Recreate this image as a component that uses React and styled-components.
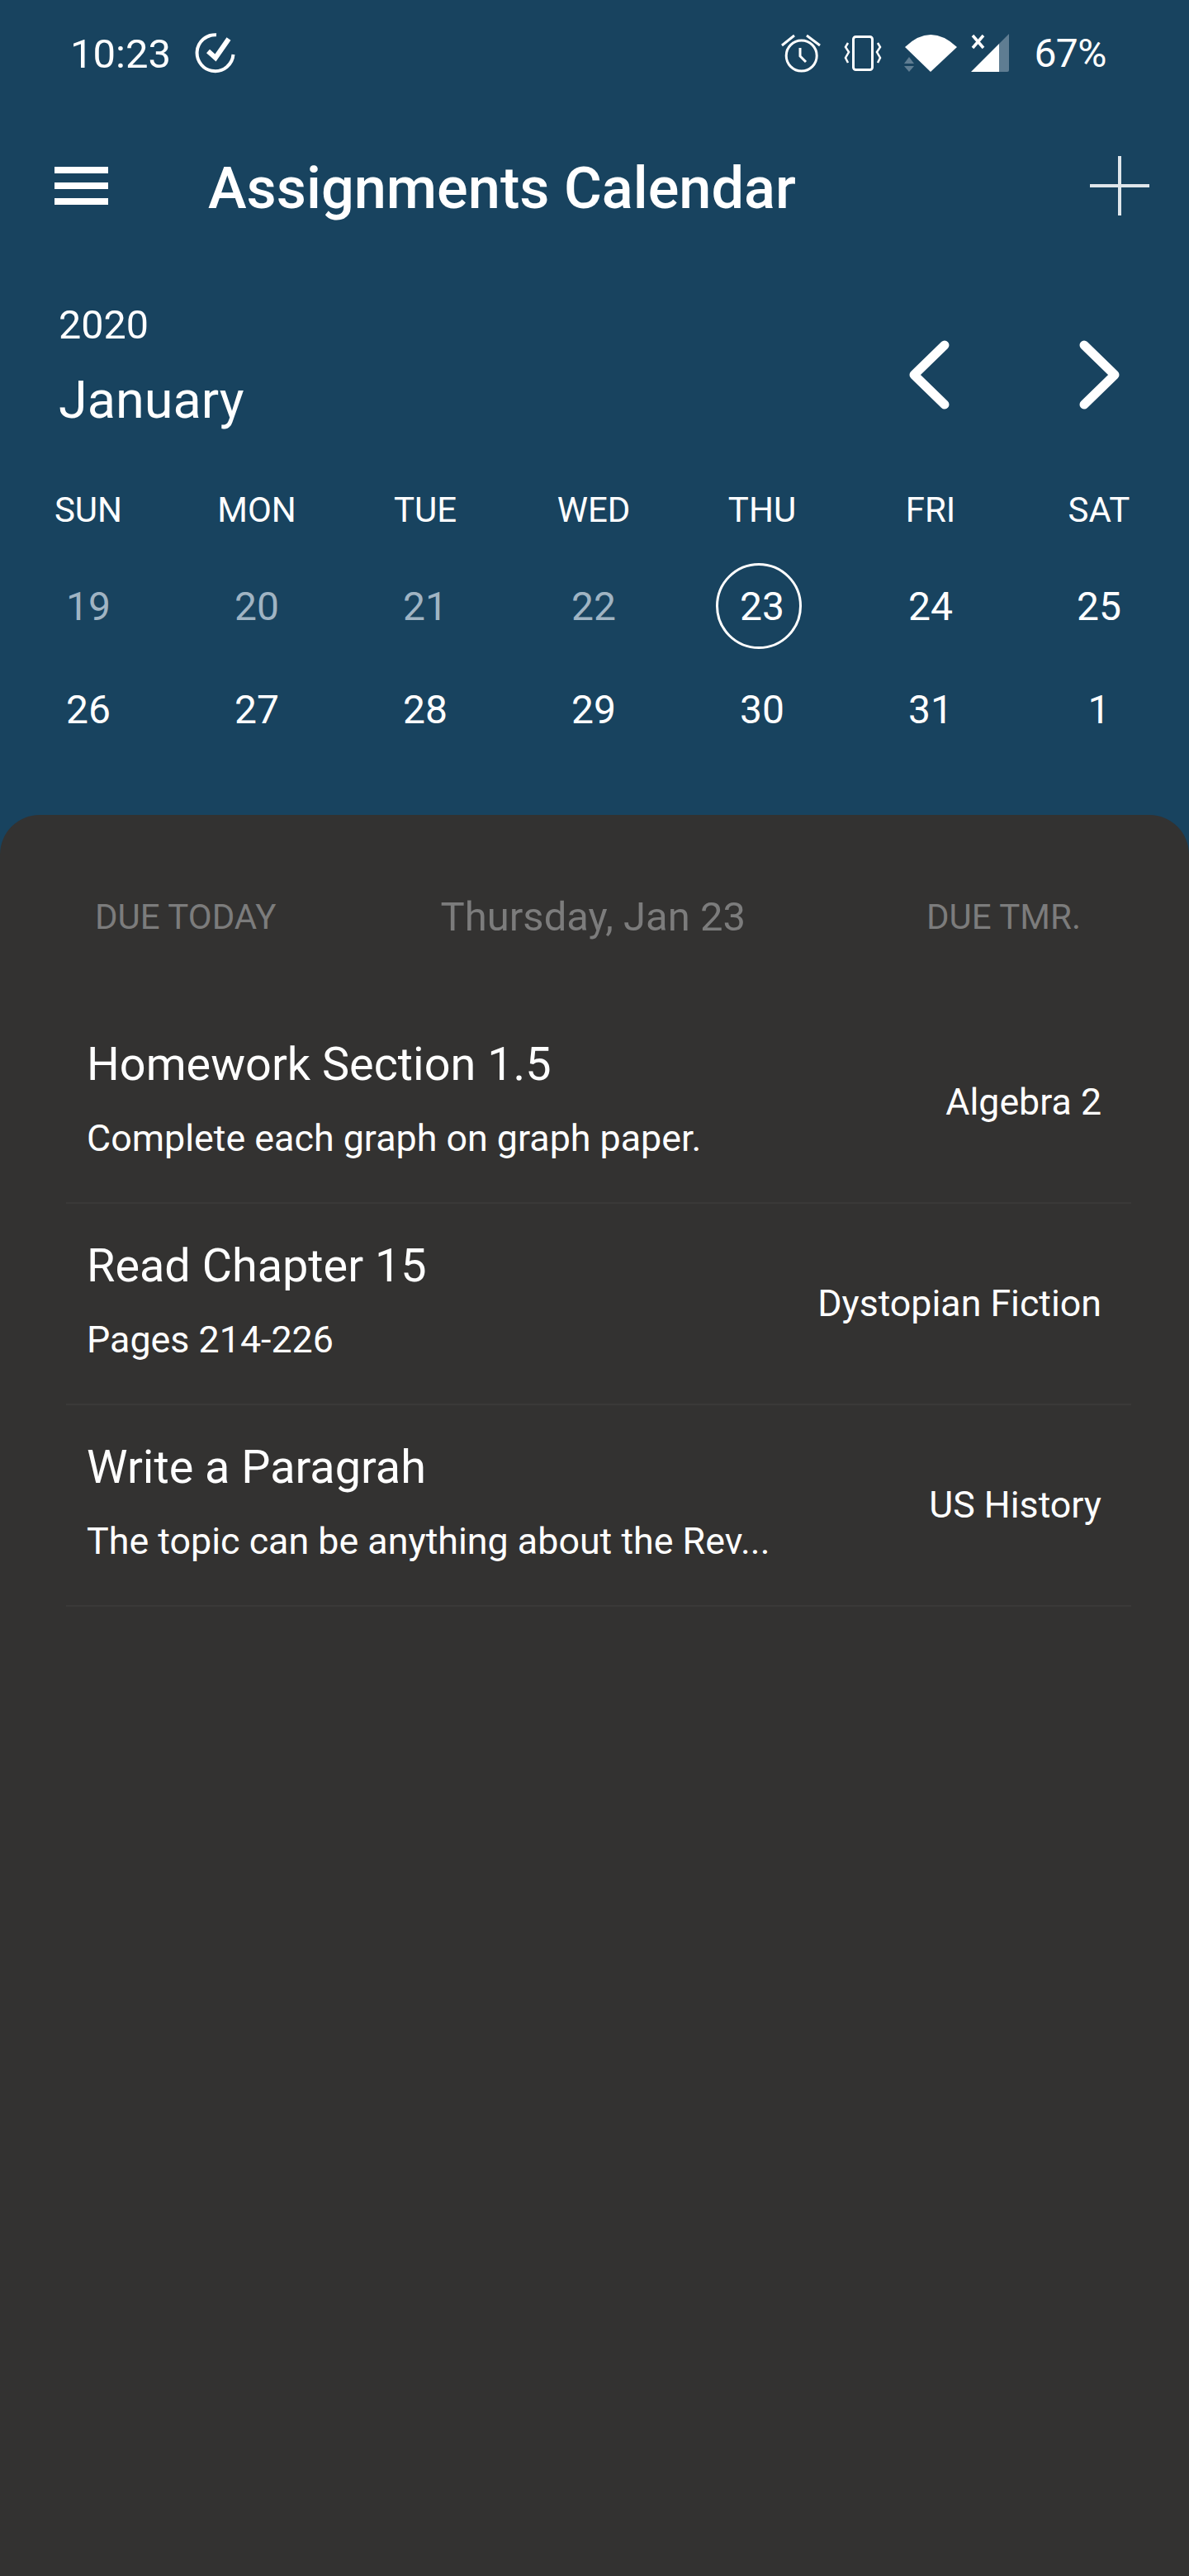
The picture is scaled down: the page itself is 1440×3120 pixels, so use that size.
import React from "react";
import styled, { createGlobalStyle } from "styled-components";

const GlobalStyle = createGlobalStyle`
  html, body {
    margin: 0;
    padding: 0;
    background: #333231;
    font-family: Roboto, "Liberation Sans", sans-serif;
  }
  * { box-sizing: border-box; }
`;

const Screen = styled.div`
  width: 1440px;
  height: 3120px;
  display: flex;
  flex-direction: column;
  background: #18435f;
  color: #ffffff;
  overflow: hidden;
`;

const StatusBar = styled.div`
  height: 130px;
  display: flex;
  align-items: center;
  padding: 0 100px 0 85px;
  flex-shrink: 0;
`;

const Clock = styled.div`
  font-size: 49px;
  line-height: 1;
  margin-right: 29px;
`;

const StatusRight = styled.div`
  margin-left: auto;
  display: flex;
  align-items: center;
`;

const StatusIcon = styled.svg`
  display: block;
  margin-right: ${(p) => p.$gap || 0}px;
`;

const Battery = styled.div`
  font-size: 48px;
  letter-spacing: -0.5px;
  line-height: 1;
  margin-left: 30px;
`;

const AppBar = styled.div`
  height: 100px;
  margin-top: 45px;
  display: flex;
  align-items: center;
  padding: 0 48px 0 66px;
  flex-shrink: 0;
`;

const MenuButton = styled.div`
  width: 65px;
  display: flex;
  flex-direction: column;
  gap: 11px;
  margin-right: 121px;
`;

const MenuBar = styled.div`
  height: 8px;
  background: #ffffff;
`;

const Title = styled.h1`
  margin: 6px 0 0;
  font-size: 70.3px;
  font-weight: 500;
  line-height: 1;
  flex: 1;
`;

const MonthRow = styled.div`
  display: flex;
  justify-content: space-between;
  align-items: center;
  padding: 0 84px 0 71px;
  margin-top: 91px;
  flex-shrink: 0;
`;

const MonthLabel = styled.div`
  display: flex;
  flex-direction: column;
`;

const Year = styled.div`
  font-size: 48.5px;
  line-height: 56px;
`;

const Month = styled.div`
  font-size: 63px;
  line-height: 70px;
  margin-top: 28px;
`;

const MonthNav = styled.div`
  display: flex;
  align-items: center;
  gap: 157px;
  margin-top: 22px;
`;

const CalendarGrid = styled.div`
  display: grid;
  grid-template-columns: repeat(7, 204px);
  padding-left: 5px;
  margin-top: 67px;
  flex-shrink: 0;
`;

const WeekDay = styled.div`
  height: 60px;
  margin-bottom: 25px;
  display: flex;
  align-items: center;
  justify-content: center;
  font-size: 42px;
`;

const DayCell = styled.div`
  height: 125px;
  display: flex;
  align-items: center;
  justify-content: center;
  font-size: 48px;
  position: relative;
  color: ${(p) => (p.$muted ? "#a0b4c3" : "#ffffff")};
`;

const TodayRing = styled.div`
  position: absolute;
  width: 104px;
  height: 104px;
  left: 46px;
  top: 10px;
  border: 3px solid #ffffff;
  border-radius: 50%;
`;

const Sheet = styled.div`
  flex: 1;
  margin-top: 65px;
  background: #333231;
  border-radius: 48px 48px 0 0;
`;

const DueHeader = styled.div`
  display: flex;
  align-items: center;
  justify-content: space-between;
  height: 122px;
  margin-top: 62px;
  padding: 0 131px 0 115px;
  color: #7c7c7c;
`;

const DueSide = styled.div`
  font-size: 42px;
`;

const DueDate = styled.div`
  font-size: 49px;
  margin-right: 20px;
`;

const TaskList = styled.div`
  margin: 43px 70px 0 80px;
`;

const TaskRow = styled.div`
  height: 244px;
  display: flex;
  align-items: center;
  justify-content: space-between;
  padding: 0 36px 0 25px;
  border-bottom: 2px solid #3a3938;
`;

const TaskText = styled.div`
  display: flex;
  flex-direction: column;
  gap: 32px;
  min-width: 0;
  margin-bottom: 8px;
`;

const TaskTitle = styled.div`
  font-size: 55.8px;
  line-height: 64px;
`;

const TaskNote = styled.div`
  font-size: 44.8px;
  line-height: 52px;
  white-space: nowrap;
`;

const TaskCourse = styled.div`
  font-size: 44.7px;
  white-space: nowrap;
`;

const TASKS = [
  { title: "Homework Section 1.5", note: "Complete each graph on graph paper.", course: "Algebra 2" },
  { title: "Read Chapter 15", note: "Pages 214-226", course: "Dystopian Fiction" },
  { title: "Write a Paragrah", note: "The topic can be anything about the Rev...", course: "US History" },
];

const WEEKDAYS = ["SUN", "MON", "TUE", "WED", "THU", "FRI", "SAT"];
const DAYS = [
  [19, true], [20, true], [21, true], [22, true], [23, false, true], [24], [25],
  [26], [27], [28], [29], [30], [31], [1],
];

function CheckIcon() {
  return (
    <svg width="50" height="50" viewBox="0 0 50 50" fill="none" stroke="#fff">
      <path d="M26 2.2 A22 22 0 1 0 46.5 26" strokeWidth="4" />
      <path d="M16 22 L25 30 L41 7" strokeWidth="6" />
    </svg>
  );
}

function Chevron({ right }) {
  return (
    <svg width="49" height="84" viewBox="0 0 49 84" fill="none" stroke="#fff" strokeWidth="11" strokeLinecap="round" strokeLinejoin="round">
      <path d={right ? "M6 6 L43 42 L6 78" : "M43 6 L6 42 L43 78"} />
    </svg>
  );
}

export default function App() {
  return (
    <Screen>
      <GlobalStyle />
      <StatusBar>
        <Clock>10:23</Clock>
        <CheckIcon />
        <StatusRight>
          <StatusIcon $gap={28} width="48" height="48" viewBox="0 0 48 48" fill="none" stroke="#fff" strokeWidth="3">
            <circle cx="24.7" cy="26.5" r="18.5" />
            <path d="M23 17 V27 L30 34 M1 14 L16 2 M31 2 L47 14" />
          </StatusIcon>
          <StatusIcon $gap={27} width="46" height="44" viewBox="0 0 46 44" fill="none" stroke="#fff" strokeWidth="3">
            <rect x="11.5" y="1.5" width="23" height="40" rx="3" />
            <path d="M5 9 L2 14 L6 20 L2 27 L5 33 M41 9 L44 14 L40 20 L44 27 L41 33" strokeWidth="2.5" />
          </StatusIcon>
          <StatusIcon $gap={17} width="64" height="48" viewBox="0 0 64 48" fill="none">
            <path d="M1 16 Q32 -14 64 16 L32 46 Z" fill="#fff" />
            <path d="M6 28 L12 36 L0 36 Z M0 39 L12 39 L6 46 Z" fill="#5f7d92" />
          </StatusIcon>
          <StatusIcon width="46" height="48" viewBox="0 0 46 48" fill="none">
            <path d="M34 12 L46 0 V44 Q46 46 44 46 H34 Z" fill="#5f7d92" />
            <path d="M0 46 L34 12 V46 Z" fill="#fff" />
            <path d="M2 2 L15 17 M15 2 L2 17" stroke="#fff" strokeWidth="3.5" />
          </StatusIcon>
          <Battery>67%</Battery>
        </StatusRight>
      </StatusBar>
      <AppBar>
        <MenuButton>
          <MenuBar />
          <MenuBar />
          <MenuBar />
        </MenuButton>
        <Title>Assignments Calendar</Title>
        <svg width="72" height="72" viewBox="0 0 72 72" stroke="#dfe6eb" strokeWidth="4">
          <path d="M36 0 V72 M0 36 H72" />
        </svg>
      </AppBar>
      <MonthRow>
        <MonthLabel>
          <Year>2020</Year>
          <Month>January</Month>
        </MonthLabel>
        <MonthNav>
          <Chevron />
          <Chevron right />
        </MonthNav>
      </MonthRow>
      <CalendarGrid>
        {WEEKDAYS.map((d) => (
          <WeekDay key={d}>{d}</WeekDay>
        ))}
        {DAYS.map(([n, muted, today]) => (
          <DayCell key={n} $muted={muted}>
            {today && <TodayRing />}
            {n}
          </DayCell>
        ))}
      </CalendarGrid>
      <Sheet>
        <DueHeader>
          <DueSide>DUE TODAY</DueSide>
          <DueDate>Thursday, Jan 23</DueDate>
          <DueSide>DUE TMR.</DueSide>
        </DueHeader>
        <TaskList>
          {TASKS.map((t) => (
            <TaskRow key={t.title}>
              <TaskText>
                <TaskTitle>{t.title}</TaskTitle>
                <TaskNote>{t.note}</TaskNote>
              </TaskText>
              <TaskCourse>{t.course}</TaskCourse>
            </TaskRow>
          ))}
        </TaskList>
      </Sheet>
    </Screen>
  );
}
